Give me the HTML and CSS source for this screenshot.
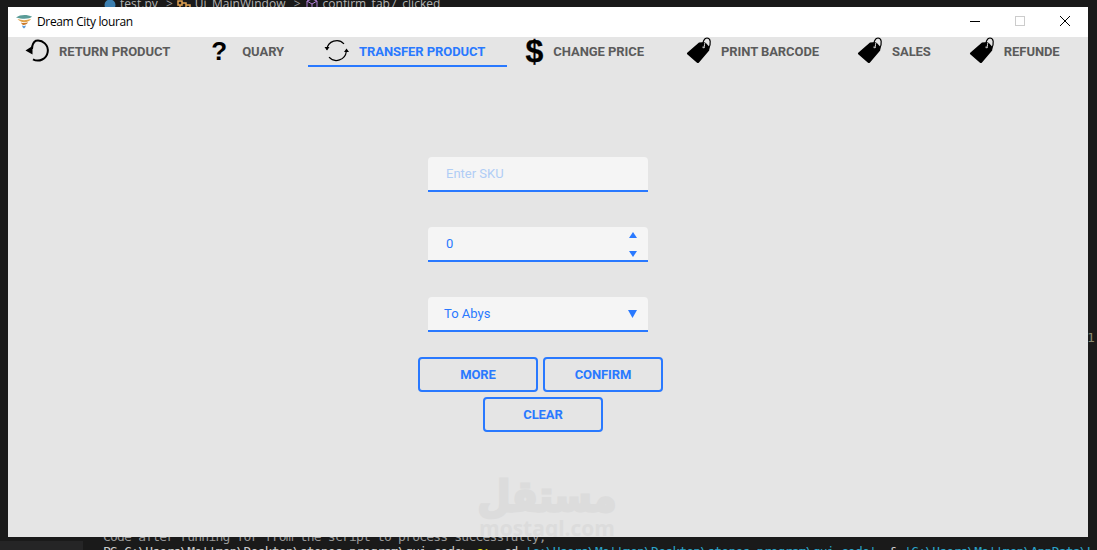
FILE: index.html
```html
<!DOCTYPE html>
<html lang="en">
<head>
<meta charset="utf-8">
<title>Dream City louran</title>
<link rel="stylesheet" href="styles.css">
</head>
<body>
<div class="desktop">
  <div class="editor-crumb">
    <svg class="crumb-icon" viewBox="0 0 12 12"><circle cx="6" cy="6" r="5.500" fill="#3c7fb0"/></svg>
    <span class="crumb-text">test.py</span><span class="sep">&gt;</span>
    <svg class="crumb-icon crumb-wide" viewBox="0 0 14 12"><path d="M1 2h4v4H1zM9 6h4v4H9zM5 4h4v4M3 6v5" fill="none" stroke="#e0a050" stroke-width="1.500"/></svg>
    <span class="crumb-text">Ui_MainWindow</span><span class="sep">&gt;</span>
    <svg class="crumb-icon crumb-wide" viewBox="0 0 14 12"><path d="M2 2l5-2 5 2v7l-5 3-5-3zM2 2l5 3 5-3M7 5v7" fill="none" stroke="#b180d7"/></svg>
    <span class="crumb-text">confirm_tab7_clicked</span>
  </div>
  <div class="editor-gutter">1</div>
  <div class="panel-left"></div>
  <div class="terminal">
    <div class="term-line term-dim">Code after running for from the script to process successfully;</div>
    <div class="term-line">PS C:\Users\Mo''men\Desktop\stones_program\gui_code&gt; <span class="t-y">c:;</span> cd <span class="t-b">'c:\Users\Mo''men\Desktop\stones_program\gui_code'</span>; &amp; <span class="t-b">'C:\Users\Mo''men\AppData\L</span></div>
  </div>

  <div class="window">
    <header class="titlebar">
      <svg class="app-icon" viewBox="0 0 16 16">
        <path d="M0 3.500C4 .3 11 .3 16 2.500c-2 2.500-9 3-16 1z" fill="#5a9c98"/>
        <path d="M1.500 5c4 1.500 9 1.500 13.500 0-1 2-3.500 3-7 3.200C6 8.300 3 7 1.500 5z" fill="#e0a24a"/>
        <path d="M5 8.500c2 .8 5 .6 7-.3-.8 1.800-2.500 2.800-4.500 2.800-1 0-2-1-2.500-2.500z" fill="#c9792c"/>
        <path d="M6 11.500c1 .5 3 .5 4 0-.5 1.500-1.200 2.500-2 3-.9-.5-1.600-1.500-2-3z" fill="#5b9bd8"/>
      </svg>
      <span class="app-title">Dream City louran</span>
      <div class="win-controls">
        <svg class="win-btn" viewBox="0 0 10 10"><path d="M0 5.500h10" stroke="#000" fill="none"/></svg>
        <svg class="win-btn" viewBox="0 0 10 10"><rect x=".5" y=".5" width="9" height="9" stroke="#ccc" fill="none"/></svg>
        <svg class="win-btn" viewBox="0 0 10 10"><path d="M0 0l10 10M10 0L0 10" stroke="#000" fill="none"/></svg>
      </div>
    </header>

    <nav class="tabs">
      <a class="tab tab-return">
        <svg class="icon" viewBox="0 0 24 24"><path d="M7 9C7 5.500 8 2.500 11 .7A10 10 0 1 1 8 19.300" fill="none" stroke="#000" stroke-width="2"/><path d="M.5 10.500L7.500 6v8.500z" fill="#000"/></svg>
        <span>RETURN PRODUCT</span>
      </a>
      <a class="tab tab-query">
        <span class="icon glyph glyph-q">?</span>
        <span>QUARY</span>
      </a>
      <a class="tab tab-active">
        <svg class="icon" viewBox="0 0 24 24"><path d="M1.800 9.500A10 10 0 0 1 19 3.800M21.300 11.500A10 10 0 0 1 4 17.200" fill="none" stroke="#000" stroke-width="1.200"/><path d="M-.5 7h5L2 10.500zM19 12h5l-2.500-3.500z" fill="#000"/></svg>
        <span>TRANSFER PRODUCT</span>
      </a>
      <a class="tab tab-price">
        <span class="icon glyph glyph-d">$</span>
        <span>CHANGE PRICE</span>
      </a>
      <a class="tab">
        <svg class="icon" viewBox="0 0 24 24"><use href="#tag"/></svg>
        <span>PRINT BARCODE</span>
      </a>
      <a class="tab">
        <svg class="icon" viewBox="0 0 24 24"><use href="#tag"/></svg>
        <span>SALES</span>
      </a>
      <a class="tab">
        <svg class="icon" viewBox="0 0 24 24"><use href="#tag"/></svg>
        <span>REFUNDE</span>
      </a>
    </nav>

    <main class="form">
      <div class="field"><span class="placeholder">Enter SKU</span></div>
      <div class="field field-spin">
        <span class="value">0</span>
        <span class="spin">
          <svg class="tri" viewBox="0 0 8 6"><path d="M4 0l4 6H0z"/></svg>
          <svg class="tri" viewBox="0 0 8 6"><path d="M4 6l4-6H0z"/></svg>
        </span>
      </div>
      <div class="field field-select">
        <span class="value">To Abys</span>
        <svg class="tri tri-select" viewBox="0 0 8 7"><path d="M4 7l4-7H0z"/></svg>
      </div>
      <div class="actions">
        <div class="btn-row">
          <button class="btn">MORE</button>
          <button class="btn">CONFIRM</button>
        </div>
        <div class="btn-row btn-row-last">
          <button class="btn">CLEAR</button>
        </div>
      </div>
    </main>

    <div class="watermark">
      <div class="wm-ar">مستقل</div>
      <div class="wm-en">mostaql.com</div>
    </div>
  </div>

  <svg class="defs" width="0" height="0">
    <defs>
      <g id="tag">
        <path d="M.5 12.500L12 2.500 18 2l4.500 5-.3 3.500-10.200 12c-.6.700-1.400.700-2 .2L.5 14.500c-.8-.7-.8-1.400 0-2z" fill="#000"/>
        <circle cx="16.500" cy="7" r="1.300" fill="#e5e5e5"/>
        <path d="M16 7.500C15 3 17-2 20-2c3.500 0 4.500 5 1.500 11" fill="none" stroke="#000" stroke-width="1.200"/>
        <path d="M17.500 6C17.300 3.500 18 2 19 1.500" fill="none" stroke="#e5e5e5" stroke-width=".9"/>
      </g>
    </defs>
  </svg>
</div>
</body>
</html>
```
FILE: styles.css
```css
* { box-sizing: border-box; }
html, body { margin: 0; padding: 0; background: #1a1a1a; }
.desktop {
  position: relative;
  width: 1097px;
  height: 550px;
  overflow: hidden;
  background: #1a1a1a;
}
.defs { position: absolute; }

.editor-crumb {
  position: absolute;
  left: 104px;
  top: -4px;
  display: flex;
  align-items: center;
  gap: 4px;
  font: 12px/16px "Open Sans", sans-serif;
  color: #b4b4b4;
  white-space: nowrap;
}
.crumb-icon { width: 12px; height: 12px; margin-top: 2px; }
.crumb-wide { width: 14px; }
.crumb-text { letter-spacing: .05px; }
.sep { color: #999; margin-left: 4px; }
.editor-gutter {
  position: absolute;
  left: 1087px;
  top: 330px;
  font: 13px/16px "DejaVu Sans Mono", monospace;
  color: #8a8a70;
}
.panel-left {
  position: absolute;
  left: 0;
  top: 541px;
  width: 83px;
  height: 9px;
  background: #252526;
}
.terminal {
  position: absolute;
  left: 103px;
  top: 530px;
  font: 13px/13px "DejaVu Sans Mono", monospace;
  letter-spacing: -.8px;
  color: #cccccc;
  white-space: nowrap;
}
.term-line { height: 13px; }
.term-dim { height: 15px; color: #999; }
.t-y { color: #e5e510; }
.t-b { color: #29a3c8; }

.window {
  position: absolute;
  left: 8px;
  top: 7px;
  width: 1080px;
  height: 530px;
  overflow: hidden;
  background: #e5e5e5;
  display: flex;
  flex-direction: column;
}
.titlebar {
  flex: none;
  height: 30px;
  background: #fff;
  display: flex;
  align-items: center;
  padding-left: 8px;
}
.app-icon { width: 16px; height: 16px; margin-right: 5px; margin-top: -1px; }
.app-title {
  font: 12px/16px "Open Sans", sans-serif;
  letter-spacing: -.35px;
  color: #000;
}
.win-controls {
  margin-left: auto;
  display: flex;
  gap: 35px;
  padding: 0 18px 2px 0;
}
.win-btn { width: 10px; height: 10px; display: block; }

.tabs {
  flex: none;
  height: 30px;
  display: flex;
  align-items: stretch;
}
.tab {
  display: flex;
  align-items: center;
  gap: 10px;
  padding: 2px 22px 0 17px;
  border-bottom: 2px solid transparent;
  font: 700 13px/16px Roboto, sans-serif;
  letter-spacing: -.07px;
  color: #5b5b5b;
  white-space: nowrap;
}
.tab-active { color: #2979ff; border-bottom-color: #2979ff; }
.tab-return { padding-right: 21px; }
.tab-query { padding-right: 24px; }
.tab-price { padding-right: 26px; }
.icon { width: 24px; height: 24px; flex: none; overflow: visible; display: block; }
.glyph {
  font-family: "Liberation Sans", sans-serif;
  font-weight: 700;
  color: #000;
  text-align: center;
  letter-spacing: 0;
}
.glyph-q { font-size: 26px; line-height: 22px; text-indent: -2px; }
.glyph-d { width: 19px; font-size: 32px; line-height: 22px; text-indent: 1px; -webkit-text-stroke: .3px #000; }

.form {
  flex: 1;
  display: flex;
  flex-direction: column;
  align-items: flex-start;
  padding: 90px 0 0 410px;
}
.field {
  width: 220px;
  height: 35px;
  flex: none;
  margin: 0 0 35px 10px;
  background: #f5f5f5;
  border-bottom: 2px solid #2979ff;
  border-radius: 4px 4px 0 0;
  display: flex;
  align-items: center;
  padding: 0 18px;
  font: 400 13px/16px Roboto, sans-serif;
  color: #2979ff;
}
.placeholder { color: #b0cdf5; }
.field-select { padding: 0 11px 0 16px; justify-content: space-between; margin-bottom: 25px; }
.field-spin { padding-right: 11px; justify-content: space-between; }
.spin {
  display: flex;
  flex-direction: column;
  justify-content: space-between;
  align-self: flex-start;
  height: 30px;
  padding-top: 5px;
}
.tri { width: 8px; height: 6px; fill: #2979ff; display: block; }
.tri-select { width: 9px; height: 8px; }

.actions { display: flex; flex-direction: column; gap: 5px; }
.btn-row { display: flex; gap: 5px; }
.btn-row-last { margin-left: 65px; }
.btn {
  width: 120px;
  height: 35px;
  padding: 0;
  background: transparent;
  border: 2px solid #2979ff;
  border-radius: 4px;
  font: 700 13px/16px Roboto, sans-serif;
  letter-spacing: -.1px;
  color: #2979ff;
}

.watermark {
  position: absolute;
  left: 464px;
  top: 464px;
  width: 150px;
  text-align: center;
  color: #dcdcdc;
}
.wm-ar {
  font: 700 38px/50px "DejaVu Sans", sans-serif;
  height: 45px;
  -webkit-text-stroke: 2.5px #dcdcdc;
  transform: scaleY(1.12);
}
.wm-en { font: 700 21px/24px "Open Sans", sans-serif; }
```
